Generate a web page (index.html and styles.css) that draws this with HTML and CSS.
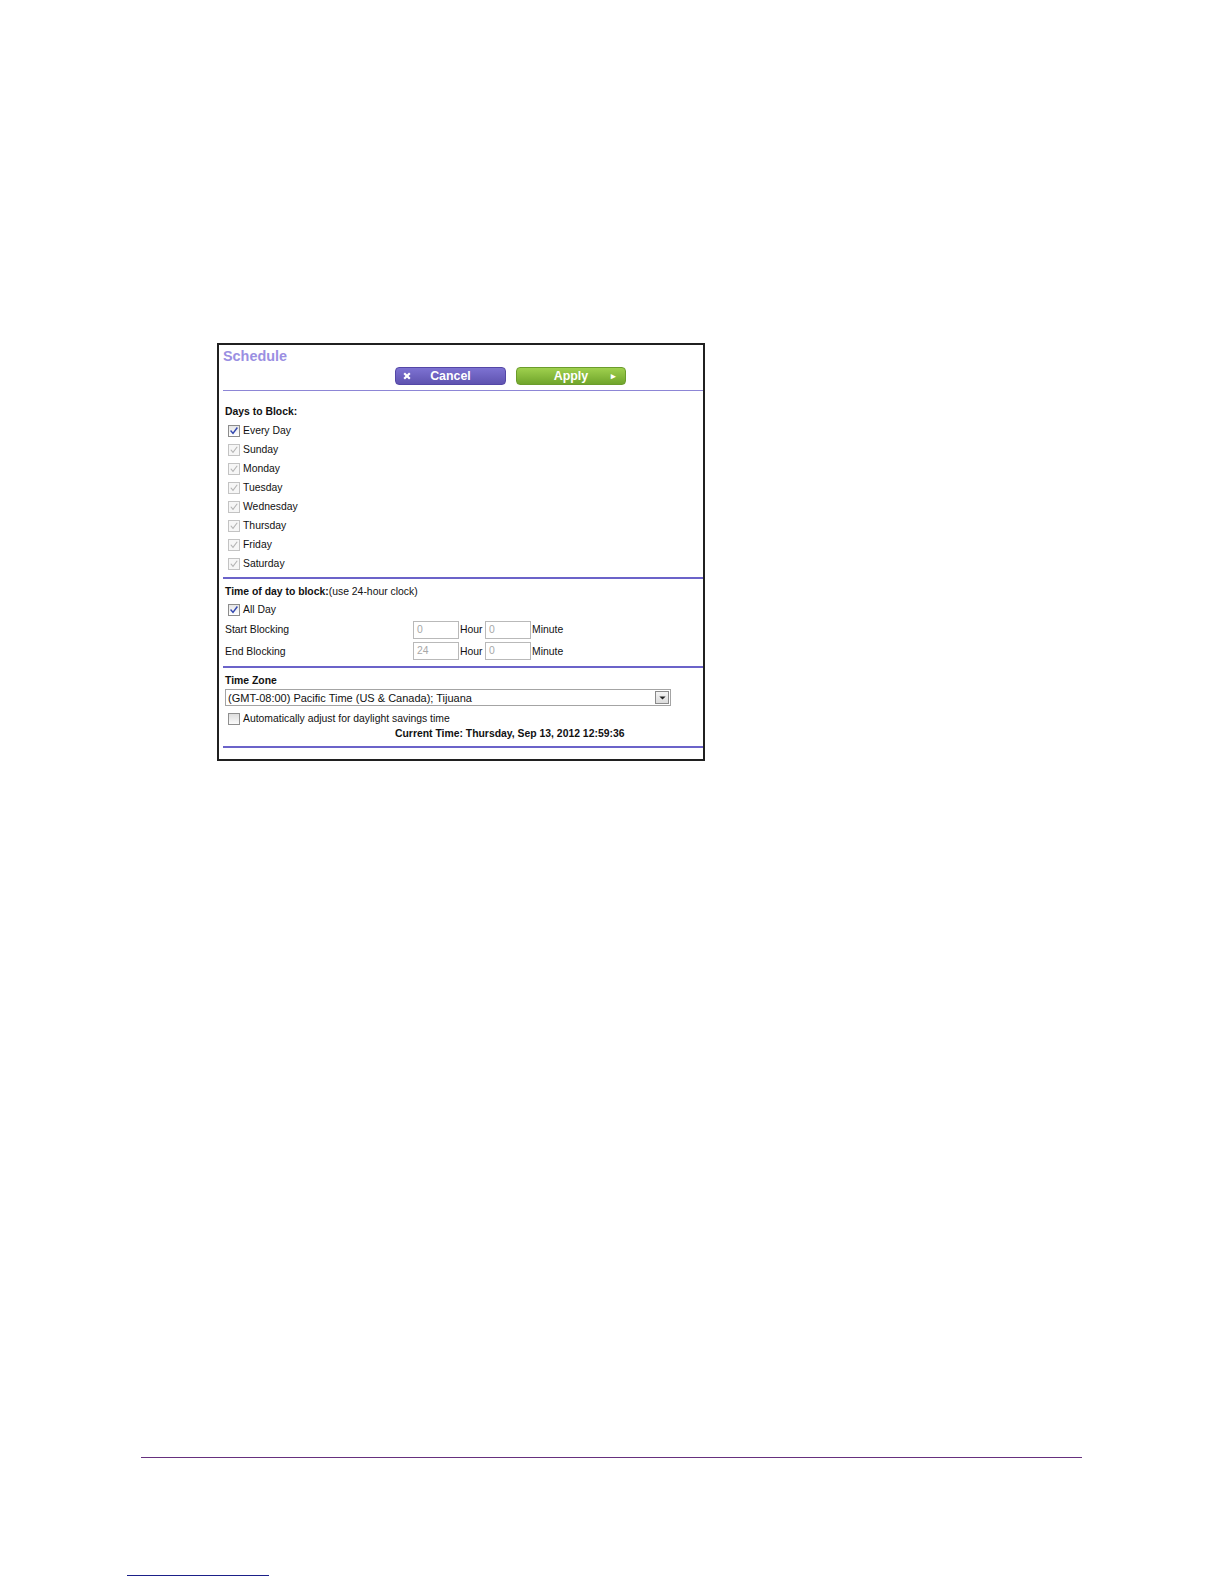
FILE: index.html
```html
<!DOCTYPE html>
<html>
<head>
<meta charset="utf-8">
<title>Schedule</title>
<link rel="stylesheet" href="styles.css">
</head>
<body>
<div class="page">
  <div class="frame">
    <div class="head">
      <div class="title">Schedule</div>
      <div class="actions">
        <div class="btn cancel"><svg class="x" viewBox="0 0 8 8"><path d="M1.2 1.2 L6.8 6.8 M6.8 1.2 L1.2 6.8"/></svg><span class="lbl">Cancel</span></div>
        <div class="btn apply"><span class="lbl">Apply</span><span class="arr">&#x25B8;</span></div>
      </div>
    </div>

    <div class="sec days">
      <div class="row label-b">Days to Block:</div>
      <div class="row check"><span class="cb on"><svg viewBox="0 0 12 12"><path d="M2.5 6.2 L4.8 8.8 L9.5 2.6" /></svg></span>Every Day</div>
      <div class="row check"><span class="cb dis"><svg viewBox="0 0 12 12"><path d="M2.5 6.2 L4.8 8.8 L9.5 2.6" /></svg></span>Sunday</div>
      <div class="row check"><span class="cb dis"><svg viewBox="0 0 12 12"><path d="M2.5 6.2 L4.8 8.8 L9.5 2.6" /></svg></span>Monday</div>
      <div class="row check"><span class="cb dis"><svg viewBox="0 0 12 12"><path d="M2.5 6.2 L4.8 8.8 L9.5 2.6" /></svg></span>Tuesday</div>
      <div class="row check"><span class="cb dis"><svg viewBox="0 0 12 12"><path d="M2.5 6.2 L4.8 8.8 L9.5 2.6" /></svg></span>Wednesday</div>
      <div class="row check"><span class="cb dis"><svg viewBox="0 0 12 12"><path d="M2.5 6.2 L4.8 8.8 L9.5 2.6" /></svg></span>Thursday</div>
      <div class="row check"><span class="cb dis"><svg viewBox="0 0 12 12"><path d="M2.5 6.2 L4.8 8.8 L9.5 2.6" /></svg></span>Friday</div>
      <div class="row check"><span class="cb dis"><svg viewBox="0 0 12 12"><path d="M2.5 6.2 L4.8 8.8 L9.5 2.6" /></svg></span>Saturday</div>
    </div>

    <div class="sec time">
      <div class="row first"><b>Time of day to block:</b>(use 24-hour clock)</div>
      <div class="row check"><span class="cb on"><svg viewBox="0 0 12 12"><path d="M2.5 6.2 L4.8 8.8 L9.5 2.6" /></svg></span>All Day</div>
      <div class="row trow">
        <span class="tlabel">Start Blocking</span>
        <span class="inp">0</span><span class="unit">Hour</span>
        <span class="inp">0</span><span class="unit">Minute</span>
      </div>
      <div class="row trow">
        <span class="tlabel">End Blocking</span>
        <span class="inp">24</span><span class="unit">Hour</span>
        <span class="inp">0</span><span class="unit">Minute</span>
      </div>
    </div>

    <div class="sec tz">
      <div class="row tzlabel label-b">Time Zone</div>
      <div class="selrow">
        <div class="select"><span class="seltext">(GMT-08:00) Pacific Time (US &amp; Canada); Tijuana</span><span class="selbtn"><svg viewBox="0 0 9 5"><path d="M0.5 0.5 H8.5 L4.5 4.5 Z"/></svg></span></div>
      </div>
      <div class="row check autorow"><span class="cb off"></span>Automatically adjust for daylight savings time</div>
      <div class="row current">Current Time: Thursday, Sep 13, 2012 12:59:36</div>
    </div>
  </div>

  <div class="rule"></div>
  <div class="short"></div>
</div>
</body>
</html>
```

FILE: styles.css
```css
* { box-sizing: border-box; }

html, body {
  margin: 0;
  padding: 0;
  background: #ffffff;
}

body {
  font-family: "Liberation Sans", Arial, sans-serif;
  font-size: 10.4px;
  color: #111111;
}

.page {
  width: 1224px;
  height: 1584px;
  overflow: hidden;
  padding-top: 343px;
}

.frame {
  margin-left: 217px;
  width: 488px;
  height: 418px;
  border: 2px solid #202020;
  background: #ffffff;
}

.head {
  margin-left: 4px;
  padding-top: 3px;
  padding-bottom: 5px;
  border-bottom: 1px solid #8d86d6;
}

.title {
  height: 16px;
  line-height: 16px;
  font-size: 14.4px;
  font-weight: bold;
  color: #9a8fe2;
}

.actions {
  display: flex;
  gap: 10px;
  margin-top: 3px;
  margin-left: 172px;
}

.btn {
  position: relative;
  width: 111px;
  height: 18px;
  border-radius: 4px;
  color: #ffffff;
  font-weight: bold;
  font-size: 12.4px;
  text-align: center;
}

.btn.cancel {
  background: linear-gradient(#7d72d2, #5f53b0);
  border: 1px solid #5447a6;
  line-height: 16px;
}

.btn.apply {
  width: 110px;
  background: linear-gradient(#9fd04e, #70a52b);
  border: 1px solid #6b9c2c;
  line-height: 16px;
}

.btn .x {
  position: absolute;
  left: 7px;
  top: 4px;
  width: 8px;
  height: 8px;
}

.btn .x path {
  stroke: #ffffff;
  stroke-width: 2.2;
  fill: none;
}

.btn .arr {
  position: absolute;
  right: 9px;
  top: 0;
  font-size: 9px;
  line-height: 16px;
}

.sec {
  margin-left: 4px;
  border-bottom: 2px solid #6b63c9;
}

.row {
  height: 19px;
  line-height: 19px;
  padding-left: 2px;
  white-space: nowrap;
}

.label-b { font-weight: bold; }

.days {
  padding-top: 11px;
  padding-bottom: 4px;
}

.check {
  display: flex;
  align-items: center;
}

.cb {
  display: inline-block;
  width: 12px;
  height: 12px;
  margin-left: 3px;
  margin-right: 3px;
  border: 1px solid #8c8c8c;
  background: linear-gradient(#e6e6e6, #ffffff);
  flex: none;
}

.cb svg {
  display: block;
  width: 10px;
  height: 10px;
}

.cb svg path {
  fill: none;
  stroke-width: 1.8;
  stroke-linecap: square;
}

.cb.on svg path { stroke: #3348b0; }

.cb.dis {
  border-color: #c3c3c3;
  background: #f6f6f6;
}

.cb.dis svg path {
  stroke: #b4b4b4;
  stroke-width: 1.3;
}

.time {
  padding-top: 3px;
  padding-bottom: 4px;
}

.time .first {
  height: 18px;
  line-height: 19px;
}

.trow {
  display: flex;
  align-items: center;
  height: 21px;
  line-height: 21px;
}

.time .trow:last-child {
  height: 22px;
}

.tlabel {
  width: 188px;
  flex: none;
}

.inp {
  width: 46px;
  height: 18px;
  line-height: 16px;
  border: 1px solid #b9b9b9;
  color: #a8a8a8;
  padding-left: 3px;
  flex: none;
}

.unit {
  padding-left: 1px;
  width: 26px;
}

.tz {
  padding-top: 4px;
  padding-bottom: 6px;
}

.tzlabel {
  height: 17px;
  line-height: 18px;
}

.selrow {
  height: 18px;
  padding-left: 2px;
}

.select {
  display: flex;
  align-items: center;
  justify-content: space-between;
  width: 446px;
  height: 17px;
  border: 1px solid #a4a4a4;
  padding-left: 2px;
  padding-right: 1px;
  font-size: 11px;
  color: #111111;
}

.selbtn {
  width: 14px;
  height: 13px;
  border: 1px solid #8a8a8a;
  background: linear-gradient(#f4f4f4, #dcdcdc);
  display: flex;
  align-items: center;
  justify-content: center;
}

.selbtn svg {
  width: 7px;
  height: 4px;
  display: block;
}

.selbtn svg path { fill: #222222; }

.autorow {
  margin-top: 4px;
  height: 15px;
  line-height: 17px;
}

.cb.off {
  border-color: #8f8f8f;
  background: linear-gradient(#dedede, #fbfbfb);
}

.current {
  height: 14px;
  line-height: 15px;
  padding-left: 172px;
  font-weight: bold;
}

.rule {
  margin-top: 696px;
  margin-left: 141px;
  width: 941px;
  height: 1px;
  background: #66307e;
}

.short {
  margin-top: 117px;
  margin-left: 127px;
  width: 142px;
  height: 1px;
  background: #1b2089;
}
```
